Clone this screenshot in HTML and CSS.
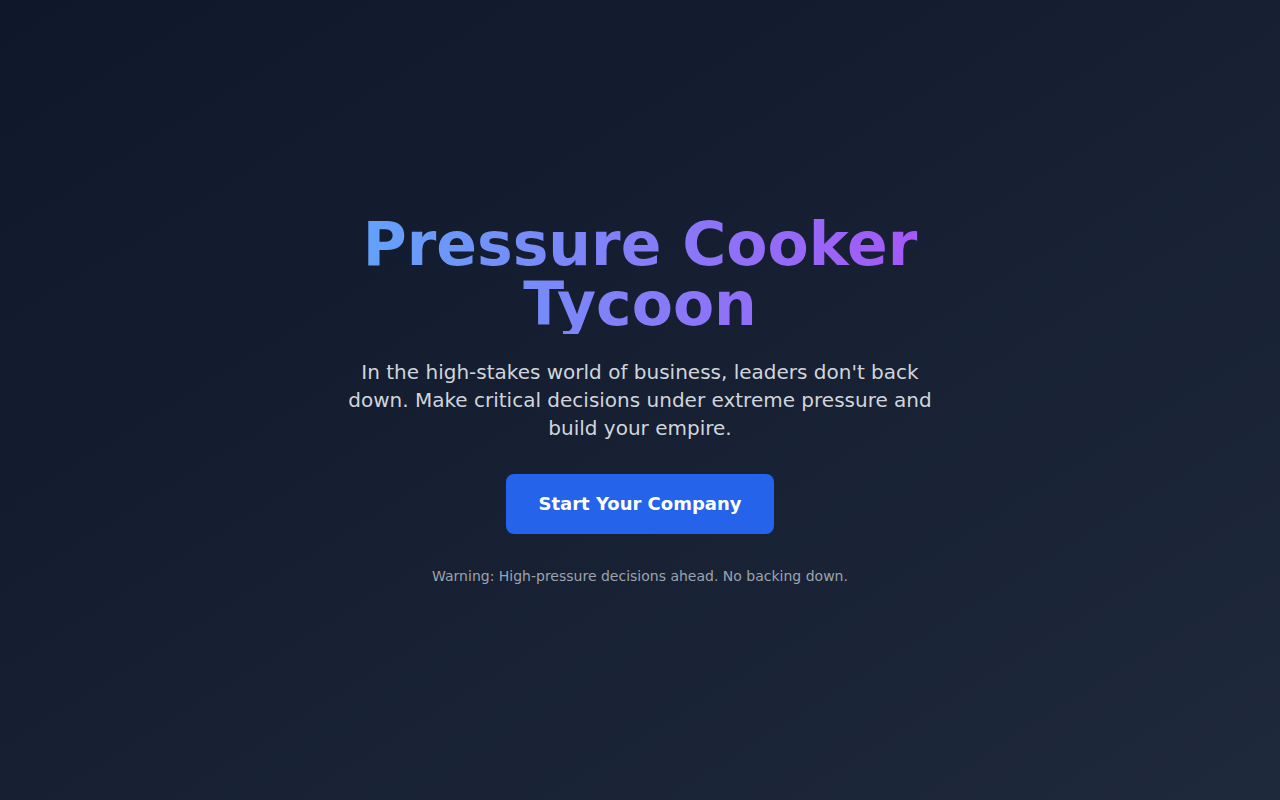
FILE: index.html
```html
<!DOCTYPE html>
<html lang="en">
<head>
  <meta charset="UTF-8">
  <meta name="viewport" content="width=device-width, initial-scale=1.0">
  <title>Pressure Cooker Tycoon</title>
  <link rel="stylesheet" href="styles.css">
</head>
<body>

<main class="intro">
  <div class="intro-box">
    <h1 class="titulo">Pressure Cooker Tycoon</h1>
    <p class="lead">
      In the high-stakes world of business, leaders don't back down. Make critical decisions under extreme pressure and build your empire.
    </p>
    <button class="btn-start">Start Your Company</button>
    <p class="aviso">Warning: High-pressure decisions ahead. No backing down.</p>
  </div>
</main>

</body>
</html>
```

FILE: styles.css
```css
* { box-sizing: border-box; margin: 0; padding: 0; }
body {
  font-family: "DejaVu Sans", Verdana, sans-serif;
  background: linear-gradient(to bottom right, #0f172a, #1e293b);
  min-height: 100vh;
  color: #fff;
}
.intro {
  min-height: 100vh;
  display: flex;
  align-items: center;
  justify-content: center;
  padding: 16px;
}
.intro-box {
  max-width: 600px;
  text-align: center;
}
.titulo {
  font-size: 60px;
  line-height: 1;
  font-weight: bold;
  margin-bottom: 24px;
  background: linear-gradient(to right, #60a5fa, #a855f7);
  -webkit-background-clip: text;
  background-clip: text;
  color: transparent;
}
.lead {
  font-size: 20px;
  line-height: 28px;
  color: #d1d5db;
  margin-bottom: 32px;
}
.btn-start {
  font-family: inherit;
  font-size: 18px;
  line-height: 28px;
  font-weight: bold;
  color: #fff;
  background: #2563eb;
  border: none;
  border-radius: 8px;
  padding: 16px 32px;
  cursor: pointer;
}
.aviso {
  margin-top: 32px;
  font-size: 14px;
  line-height: 20px;
  color: #9ca3af;
}
```
